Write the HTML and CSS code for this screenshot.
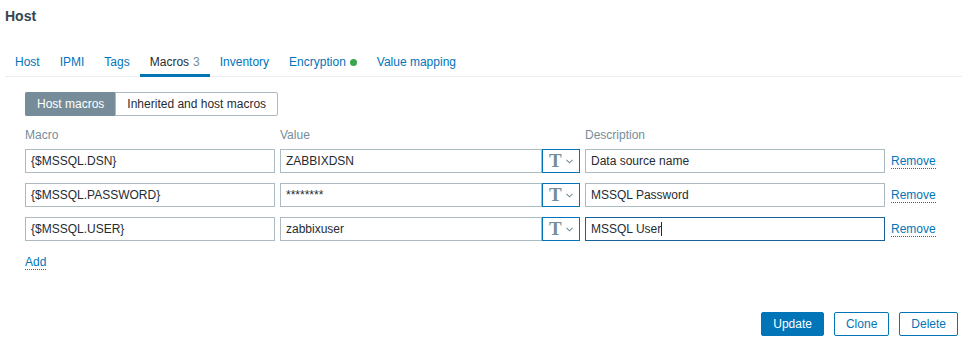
FILE: index.html
```html
<!DOCTYPE html>
<html lang="en">
<head>
    <meta charset="UTF-8">
    <title>Host</title>
    <link rel="stylesheet" href="styles.css">
</head>
<body>
    <div class="dialog">
        <h4 class="dialog-title">Host</h4>

        <ul class="tabs">
            <li><a href="#">Host</a></li>
            <li><a href="#">IPMI</a></li>
            <li><a href="#">Tags</a></li>
            <li class="active"><a href="#">Macros</a><span class="count">3</span></li>
            <li><a href="#">Inventory</a></li>
            <li><a href="#">Encryption</a><span class="status-dot"></span></li>
            <li><a href="#">Value mapping</a></li>
        </ul>

        <div class="tab-body">
            <div class="segmented">
                <span class="seg active">Host macros</span>
                <span class="seg">Inherited and host macros</span>
            </div>

            <div class="macros">
                <div class="col-head">Macro</div>
                <div class="col-head">Value</div>
                <div class="col-head">Description</div>
                <div class="col-head"></div>

                <input type="text" class="field" value="{$MSSQL.DSN}">
                <div class="value-group">
                    <input type="text" class="field" value="ZABBIXDSN">
                    <button class="type-btn"><span class="type-t">T</span><svg width="7" height="5" viewBox="0 0 7 5"><polyline points="0.5,0.8 3.5,3.8 6.5,0.8" fill="none" stroke="#768d99" stroke-width="1.1"/></svg></button>
                </div>
                <input type="text" class="field" value="Data source name">
                <div class="remove-cell"><a href="#" class="link">Remove</a></div>

                <input type="text" class="field" value="{$MSSQL.PASSWORD}">
                <div class="value-group">
                    <input type="text" class="field" value="********">
                    <button class="type-btn"><span class="type-t">T</span><svg width="7" height="5" viewBox="0 0 7 5"><polyline points="0.5,0.8 3.5,3.8 6.5,0.8" fill="none" stroke="#768d99" stroke-width="1.1"/></svg></button>
                </div>
                <input type="text" class="field" value="MSSQL Password">
                <div class="remove-cell"><a href="#" class="link">Remove</a></div>

                <input type="text" class="field" value="{$MSSQL.USER}">
                <div class="value-group">
                    <input type="text" class="field" value="zabbixuser">
                    <button class="type-btn"><span class="type-t">T</span><svg width="7" height="5" viewBox="0 0 7 5"><polyline points="0.5,0.8 3.5,3.8 6.5,0.8" fill="none" stroke="#768d99" stroke-width="1.1"/></svg></button>
                </div>
                <div class="field focused">MSSQL User<span class="caret"></span></div>
                <div class="remove-cell"><a href="#" class="link">Remove</a></div>
            </div>

            <div class="add-row"><a href="#" class="link">Add</a></div>
        </div>

        <div class="footer">
            <button class="btn primary">Update</button>
            <button class="btn alt">Clone</button>
            <button class="btn alt">Delete</button>
        </div>
    </div>
</body>
</html>
```
FILE: styles.css
```css
body {
    margin: 0;
    font-family: "Liberation Sans", Arial, sans-serif;
    font-size: 12px;
    color: #1f2c33;
    background-color: #fff;
}
.dialog {
    width: 962px;
    height: 340px;
}
.dialog-title {
    margin: 0;
    padding: 8px 5px 0;
    font-size: 14px;
    line-height: 16px;
    font-weight: bold;
    color: #34454f;
}
.tabs {
    display: flex;
    list-style: none;
    margin: 23px 0 0 5px;
    padding: 0;
    border-bottom: 1px solid #ebeef0;
}
.tabs li {
    padding: 8px 10px 5px;
    line-height: 14px;
    border-bottom: 3px solid transparent;
    margin-bottom: -1px;
    display: flex;
    align-items: center;
}
.tabs a {
    color: #0275b8;
    text-decoration: none;
}
.tabs li.active {
    border-bottom-color: #0275b8;
}
.tabs li.active a {
    color: #1f2c33;
}
.count {
    margin-left: 4px;
    color: #768d99;
}
.status-dot {
    width: 7px;
    height: 7px;
    border-radius: 50%;
    background-color: #3aa54a;
    margin-left: 4px;
    margin-top: 1px;
}
.tab-body {
    padding-left: 25px;
}
.segmented {
    display: inline-flex;
    margin-top: 15px;
}
.seg {
    height: 24px;
    box-sizing: border-box;
    line-height: 22px;
    padding: 0 11px;
    border: 1px solid #acbbc2;
    color: #1f2c33;
}
.seg:first-child {
    border-radius: 2px 0 0 2px;
    border-right: none;
}
.seg:last-child {
    border-radius: 0 2px 2px 0;
}
.seg.active {
    background-color: #768d99;
    border-color: #768d99;
    color: #fff;
}
.macros {
    display: grid;
    grid-template-columns: 250px 300px 300px auto;
    column-gap: 5px;
    row-gap: 10px;
    margin-top: 12px;
    align-items: center;
}
.col-head {
    line-height: 14px;
    color: #768d99;
    margin-bottom: -3px;
}
.field {
    height: 24px;
    box-sizing: border-box;
    padding: 0 5px;
    border: 1px solid #acbbc2;
    border-radius: 0;
    font-family: inherit;
    font-size: 12px;
    line-height: 22px;
    color: #1f2c33;
    background-color: #fff;
    outline: none;
    width: 100%;
}
.field.focused {
    border-color: #1a619a;
}
.caret {
    display: inline-block;
    width: 1px;
    height: 14px;
    background-color: #1f2c33;
    vertical-align: -3px;
}
.value-group {
    display: flex;
}
.value-group .field {
    width: 262px;
    flex: none;
}
.type-btn {
    width: 38px;
    height: 24px;
    box-sizing: border-box;
    border: 1px solid #0275b8;
    background-color: #fff;
    padding: 0 0 0 6px;
    display: flex;
    align-items: center;
    cursor: pointer;
}
.type-t {
    font-family: "Liberation Serif", "Times New Roman", serif;
    font-size: 19px;
    font-weight: bold;
    line-height: 20px;
    color: #768d99;
    margin-right: 4px;
}
.remove-cell {
    padding-left: 1px;
    line-height: 14px;
}
.link {
    color: #0275b8;
    text-decoration: none;
    border-bottom: 1px dotted #0275b8;
}
.add-row {
    margin-top: 14px;
    line-height: 14px;
}
.footer {
    display: flex;
    justify-content: flex-end;
    gap: 10px;
    margin-top: 43px;
    padding-right: 4px;
}
.btn {
    height: 24px;
    box-sizing: border-box;
    padding: 0 11px;
    border: 1px solid #0275b8;
    border-radius: 2px;
    font-family: inherit;
    font-size: 12px;
    cursor: pointer;
}
.btn.primary {
    background-color: #0275b8;
    color: #fff;
}
.btn.alt {
    background-color: #fff;
    color: #0275b8;
}
```
